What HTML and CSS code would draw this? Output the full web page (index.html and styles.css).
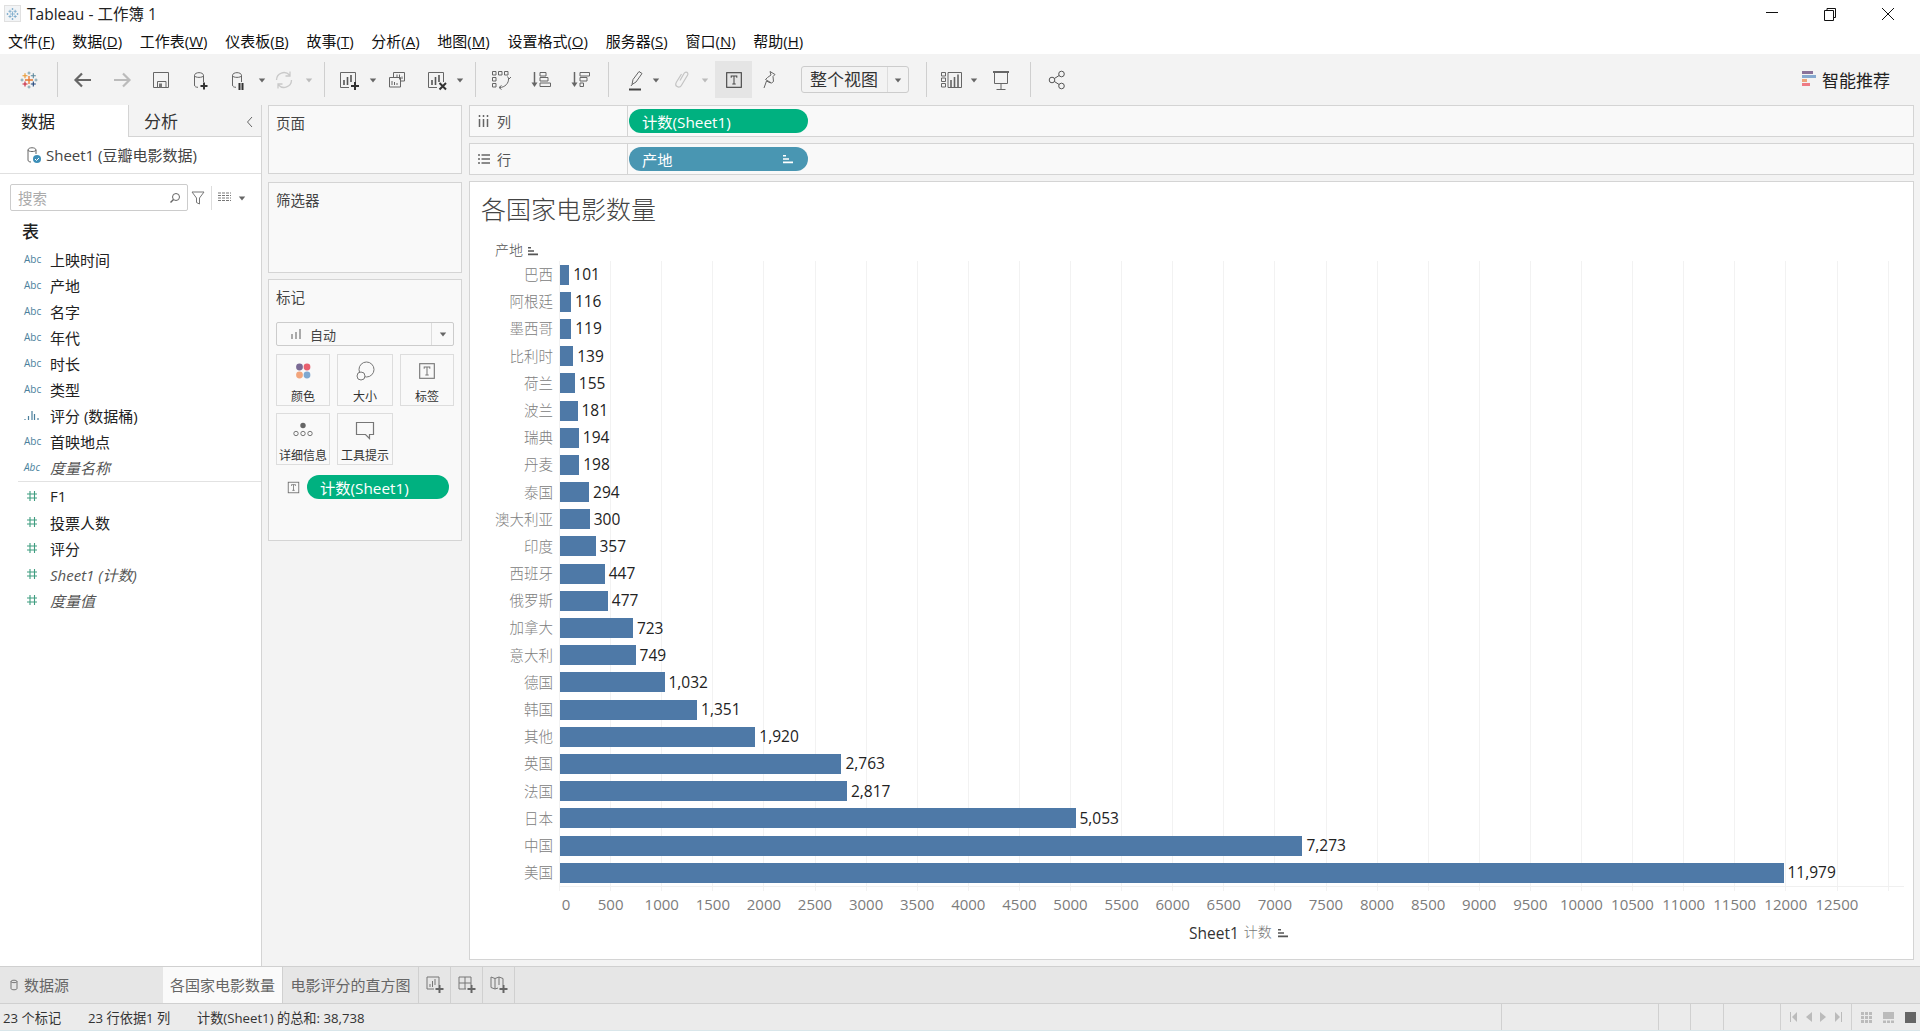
FILE: index.html
```html
<!DOCTYPE html>
<html lang="zh-CN">
<head>
<meta charset="utf-8">
<title>Tableau - 工作簿 1</title>
<link rel="stylesheet" href="styles.css">
</head>
<body>
<svg class="defs" width="0" height="0">
  <symbol id="dd" viewBox="0 0 10 10"><path d="M1 3h8L5 8z" fill="currentColor"/></symbol>
  <symbol id="logo" viewBox="0 0 24 24"><g fill="none" stroke-width="1.1">
    <path d="M8 12h8M12 8v8" stroke="#e8762c" stroke-width="1.300"/>
    <path d="M5.500 7.700h5M8 5.200v5" stroke="#e8962c"/>
    <path d="M13.800 7.700h5M16.300 5.200v5" stroke="#5b879b"/>
    <path d="M5.500 16h5M8 13.500v5" stroke="#c72037"/>
    <path d="M13.800 16h5M16.300 13.500v5" stroke="#1f447a"/>
    <path d="M10.500 5h3M12 3.500v3M10.500 19h3M12 17.500v3M3.500 12h3M5 10.500v3M17.500 12h3M19 10.500v3" stroke="#7099a6" stroke-width="0.900"/>
  </g></symbol>
  <symbol id="logo-pale" viewBox="0 0 24 24"><path d="M8 12h8M12 8v8M5.500 7.700h5M8 5.200v5M13.800 7.700h5M16.300 5.200v5M5.500 16h5M8 13.500v5M13.800 16h5M16.300 13.500v5M10.500 4h3M12 2.500v3M10.500 20h3M12 18.500v3M2.500 12h3M4 10.500v3M18.500 12h3M20 10.500v3" fill="none" stroke="#6fa3c7" stroke-width="1.200"/></symbol>
  <symbol id="db" viewBox="0 0 24 24"><path d="M6.500 7.500C6.500 3.700 15.500 3.700 15.500 7.500M6.500 7.500C6.500 10 15.500 10 15.500 7.500V14M6.500 7.500V17C6.500 18.600 8 19.300 10 19.300" fill="none" stroke="currentColor"/></symbol>
  <symbol id="chartbox" viewBox="0 0 24 24"><path d="M18.500 14V4.500H3.500V19.500H12" fill="none" stroke="#666"/><path d="M7 12v5M10.500 9v8M14 7v7" stroke="#555" stroke-width="1.600"/></symbol>
  <symbol id="hash" viewBox="0 0 12 12"><path d="M4 1v10M8.500 1v10M1 4h10M1 8h10" stroke="#3f9d80" stroke-width="1.100" fill="none"/></symbol>
  <symbol id="sort" viewBox="0 0 12 10"><path d="M1 1h3v1.500H1zM1 4.200h6v1.500H1zM1 7.500h10V9.200H1z" fill="currentColor"/></symbol>
  <symbol id="tbox" viewBox="0 0 16 16"><rect x="1.500" y="1.500" width="13" height="13" fill="none" stroke="currentColor"/><path d="M5.500 6V4.500h5V6M8 4.500v7M6.500 11.500h3" fill="none" stroke="currentColor" stroke-width="0.900"/></symbol>
</svg>

<header class="titlebar">
  <span class="app-icon"><svg width="16" height="16" viewBox="0 0 24 24"><use href="#logo-pale"/></svg></span>
  <span class="app-name">Tableau - 工作簿 1</span>
  <span class="win-btns">
    <svg class="win" viewBox="0 0 14 14"><path d="M1 5.500h12" stroke="#111" fill="none"/></svg>
    <svg class="win" viewBox="0 0 14 14"><path d="M1.500 3.500h9v10h-9zM4 3.500V1.500h8.500v9H10.500" stroke="#111" fill="none"/></svg>
    <svg class="win" viewBox="0 0 14 14"><path d="M1 1l12 12M13 1L1 13" stroke="#111" fill="none"/></svg>
  </span>
</header>

<nav class="menubar">
  <span>文件(<u>F</u>)</span><span>数据(<u>D</u>)</span><span>工作表(<u>W</u>)</span><span>仪表板(<u>B</u>)</span><span>故事(<u>T</u>)</span><span>分析(<u>A</u>)</span><span>地图(<u>M</u>)</span><span>设置格式(<u>O</u>)</span><span>服务器(<u>S</u>)</span><span>窗口(<u>N</u>)</span><span>帮助(<u>H</u>)</span>
</nav>

<div class="toolbar">
  <div class="tg g0"><span class="tb w57"><svg class="ic"><use href="#logo"/></svg></span></div><i class="sep"></i>
  <div class="tg g1">
    <span class="tb w39"><svg class="ic" viewBox="0 0 24 24"><path d="M20 12H5M11 5.500L4.500 12l6.500 6.500" fill="none" stroke="#666" stroke-width="2.200"/></svg></span>
    <span class="tb w39"><svg class="ic" viewBox="0 0 24 24"><path d="M4 12h15M13 5.500l6.500 6.500-6.500 6.500" fill="none" stroke="#bbb" stroke-width="2.200"/></svg></span>
    <span class="tb w39"><svg class="ic" viewBox="0 0 24 24"><path d="M4.500 4.500h15v15h-15zM8.500 19.500v-6h8.500v6" fill="none" stroke="#666"/><rect x="10" y="15.500" width="3" height="4" fill="#777"/></svg></span>
    <span class="tb w39 ink-g"><svg class="ic" viewBox="0 0 24 24"><use href="#db"/><path d="M16 14.500v7M12.500 18h7" stroke="#333" stroke-width="2"/></svg></span>
    <span class="tb w37 ink-g"><svg class="ic" viewBox="0 0 24 24"><use href="#db"/><path d="M13.500 15v7M16.500 15v7" stroke="#333" stroke-width="2"/></svg></span>
    <span class="tb w12"><svg class="dd"><use href="#dd"/></svg></span>
    <span class="tb w32"><svg class="ic" viewBox="0 0 24 24"><path d="M4.500 12A7.500 7.500 0 0 1 17.500 7M19.500 12A7.500 7.500 0 0 1 6.500 17M18 3.500V8h-4.500M6 20.500V16h4.500" fill="none" stroke="#c9c9c9" stroke-width="1.300"/></svg></span>
    <span class="tb w18 off"><svg class="dd"><use href="#dd"/></svg></span>
  </div><i class="sep"></i>
  <div class="tg g2">
    <span class="tb w38"><svg class="ic" viewBox="0 0 24 24"><use href="#chartbox"/><path d="M18 14v8M14 18h8" stroke="#333" stroke-width="2"/></svg></span>
    <span class="tb w10"><svg class="dd"><use href="#dd"/></svg></span>
    <span class="tb w40"><svg class="ic" viewBox="0 0 24 24"><path d="M7.500 9V4.500h11V13H15M3.500 9.500h11V19h-11z" fill="#f4f4f4" stroke="#666"/><path d="M11 6.500v3M13.500 6.500v5M16 8.500v2.500M6 13v4M8.500 14v3M11 15v2" stroke="#666" fill="none"/></svg></span>
    <span class="tb w38"><svg class="ic" viewBox="0 0 24 24"><use href="#chartbox"/><path d="M14.500 15l6.500 6.500M21 15l-6.500 6.500" stroke="#333" stroke-width="2"/></svg></span>
    <span class="tb w8"><svg class="dd"><use href="#dd"/></svg></span>
  </div><i class="sep"></i>
  <div class="tg g3">
    <span class="tb w40"><svg class="ic" viewBox="0 0 24 24"><path d="M3.500 3.500h3.500V7H3.500zM9.500 3.500H13V7H9.500zM15.500 3.500H19V7h-3.500zM3.500 9.500h3.500V13H3.500zM3.500 15.500h3.500V19H3.500zM19.500 10.500C20 15 16 19.500 10.500 19.500M18.500 8.500l1.500 2.500 2-2M12.500 17.500l-2.500 2 2.500 2" fill="none" stroke="#666"/></svg></span>
    <span class="tb w40"><svg class="ic" viewBox="0 0 24 24"><path d="M5.500 4v12" stroke="#666" stroke-width="1.500"/><path d="M2.500 14.500h6L5.500 19z" fill="#666"/><path d="M11 4.500h6V8h-6zM11 9.500h8V13h-8zM11 15h10.500v3.500H11z" fill="none" stroke="#666"/></svg></span>
    <span class="tb w39"><svg class="ic" viewBox="0 0 24 24"><path d="M5.500 4v12" stroke="#666" stroke-width="1.500"/><path d="M2.500 14.500h6L5.500 19z" fill="#666"/><path d="M11 4.500h9.500V8H11zM11 9.500h7V13h-7zM11 15h3.500v3.500H11z" fill="none" stroke="#666"/></svg></span>
  </div><i class="sep"></i>
  <div class="tg g4">
    <span class="tb w32"><svg class="ic" viewBox="0 0 24 24"><path d="M9 16.500l1-5L16 3.500l3 2-6 8.500zM8 18l1-1.500" fill="none" stroke="#666"/><path d="M6 21.500h12" stroke="#444" stroke-width="2"/></svg></span>
    <span class="tb w10"><svg class="dd"><use href="#dd"/></svg></span>
    <span class="tb w39"><svg class="ic" viewBox="0 0 24 24"><path d="M11 12.500l4-7c1.800-2.800 5-0.800 3.500 1.800l-6 10c-2.500 3.800-7.500 0.800-5-3.300l5-8" fill="none" stroke="#c4c4c4" stroke-width="1.200"/></svg></span>
    <span class="tb w10 off"><svg class="dd"><use href="#dd"/></svg></span>
    <span class="tb w37 sel"><svg class="tbig"><use href="#tbox"/></svg></span>
    <span class="tb w34"><svg class="ic" viewBox="0 0 24 24"><path d="M13 3.500l5 3-2 2 .5 5-2 1.500-6-3.500 2-2L14 7zM9.500 13L7 20M9.500 13l4 2" fill="none" stroke="#666"/></svg></span>
    <span class="fit"><span class="fit-txt">整个视图</span><span class="fit-dd"><svg class="dd"><use href="#dd"/></svg></span></span>
  </div><i class="sep"></i>
  <div class="tg g5">
    <span class="tb w34"><svg class="ic" viewBox="0 0 24 24"><path d="M1.500 4.500h4v3.500h-4zM1.500 10h4v3.500h-4zM1.500 15.500h4V19h-4zM8 4.500h13.500V19.500H8z" fill="none" stroke="#666"/><path d="M11 12v7M14.500 9v10M18 6.500V19" stroke="#666" stroke-width="1.600"/></svg></span>
    <span class="tb w10"><svg class="dd"><use href="#dd"/></svg></span>
    <span class="tb w44"><svg class="ic" viewBox="0 0 24 24"><path d="M4 4h16" stroke="#666" stroke-width="2"/><path d="M5.500 4.500v11h13v-11M12 15.500v5.500M7.500 21.500h9" fill="none" stroke="#666"/></svg></span>
  </div><i class="sep"></i>
  <div class="tg g6">
    <span class="tb w40"><svg class="ic" viewBox="0 0 24 24"><circle cx="7" cy="12" r="2.800" fill="none" stroke="#555"/><circle cx="16.500" cy="6" r="2.800" fill="none" stroke="#555"/><circle cx="16.500" cy="18" r="2.800" fill="none" stroke="#555"/><path d="M9.400 10.500l4.700-3M9.400 13.500l4.700 3" stroke="#555" fill="none"/></svg></span>
  </div>
  <div class="smart">
    <span class="smart-ic"><i class="b1"></i><i class="b2"></i><i class="b3"></i><i class="b4"></i></span>
    <span>智能推荐</span>
  </div>
</div>

<main class="workspace">
  <aside class="sidebar">
    <div class="side-tabs">
      <span class="stab on">数据</span>
      <span class="stab off-tab">分析<svg class="chev" viewBox="0 0 8 12"><path d="M6 1L1.500 6 6 11" fill="none" stroke="#666"/></svg></span>
    </div>
    <div class="source">
      <svg class="src-ic" viewBox="0 0 16 18"><path d="M2 4C2 1 10 1 10 4M2 4C2 6 10 6 10 4V8M2 4V14C2 15.500 3.500 16 5 16" fill="none" stroke="#666"/><circle cx="11" cy="13" r="4" fill="#3d8fb8"/><path d="M9 13l1.500 1.500L13 12" stroke="#fff" fill="none"/></svg>
      <span>Sheet1 (豆瓣电影数据)</span>
    </div>
    <div class="search-row">
      <span class="search">搜索<svg class="mag" viewBox="0 0 12 12"><circle cx="7" cy="5" r="3.500" fill="none" stroke="#666"/><path d="M4.500 7.500L1.500 10.500" stroke="#666" stroke-width="1.400"/></svg></span>
      <svg class="funnel" viewBox="0 0 14 16"><path d="M1 2h12L8.500 8v6l-3-1.500V8z" fill="none" stroke="#777"/></svg>
      <i class="vsep"></i>
      <svg class="gridic" viewBox="0 0 13 11"><path d="M0 1h13M0 3.500h13M0 6h13M0 8.500h13" stroke="#777" stroke-dasharray="3 1" fill="none"/></svg>
      <svg class="dd ddgray"><use href="#dd"/></svg>
    </div>
    <div class="table-head">表</div>
    <ul class="fields">
      <li><span class="abc">Abc</span>上映时间</li>
      <li><span class="abc">Abc</span>产地</li>
      <li><span class="abc">Abc</span>名字</li>
      <li><span class="abc">Abc</span>年代</li>
      <li><span class="abc">Abc</span>时长</li>
      <li><span class="abc">Abc</span>类型</li>
      <li><svg class="abc hist" viewBox="0 0 16 10"><path d="M1 9v1M4.500 6v4M8 1v9M10.500 4v6M14 8v2" stroke="#4a7f9c" stroke-width="1.200"/></svg>评分 (数据桶)</li>
      <li><span class="abc">Abc</span>首映地点</li>
      <li class="calc"><span class="abc">Abc</span>度量名称</li>
    </ul>
    <ul class="fields measures">
      <li><svg class="hash"><use href="#hash"/></svg>F1</li>
      <li><svg class="hash"><use href="#hash"/></svg>投票人数</li>
      <li><svg class="hash"><use href="#hash"/></svg>评分</li>
      <li class="calc"><svg class="hash"><use href="#hash"/></svg>Sheet1 (计数)</li>
      <li class="calc"><svg class="hash"><use href="#hash"/></svg>度量值</li>
    </ul>
  </aside>

  <section class="cards">
    <div class="panel pages"><h3>页面</h3></div>
    <div class="panel filters"><h3>筛选器</h3></div>
    <div class="panel marks">
      <h3>标记</h3>
      <div class="marktype">
        <svg class="auto-ic" viewBox="0 0 12 12"><path d="M2 6v5M6 4v7M10 1v10" stroke="#aaa" stroke-width="2"/></svg>
        <span class="mt-name">自动</span>
        <span class="mt-dd"><svg class="dd"><use href="#dd"/></svg></span>
      </div>
      <div class="markgrid">
        <div class="mcard"><svg class="mic" viewBox="0 0 24 24"><circle cx="8.500" cy="8" r="3.400" fill="#7a6a94"/><circle cx="16" cy="8" r="3.400" fill="#e8606f"/><circle cx="8.500" cy="16" r="3.400" fill="#f2a57c"/><circle cx="16" cy="16" r="3.400" fill="#7fa8d0"/></svg><span>颜色</span></div>
        <div class="mcard"><svg class="mic" viewBox="0 0 24 24"><circle cx="13.500" cy="10.500" r="7.500" fill="none" stroke="#777"/><circle cx="8" cy="17" r="4" fill="#fafafa" stroke="#777"/></svg><span>大小</span></div>
        <div class="mcard"><svg class="mic tgray" viewBox="0 0 16 16"><use href="#tbox"/></svg><span>标签</span></div>
        <div class="mcard"><svg class="mic" viewBox="0 0 24 24"><circle cx="12" cy="7.500" r="2.700" fill="#666"/><circle cx="5" cy="15.500" r="2.200" fill="none" stroke="#777"/><circle cx="12" cy="15.500" r="2.200" fill="none" stroke="#777"/><circle cx="19" cy="15.500" r="2.200" fill="none" stroke="#777"/></svg><span>详细信息</span></div>
        <div class="mcard"><svg class="mic" viewBox="0 0 24 24"><path d="M3.500 4.500h17v12h-4v4l-4-4h-9z" fill="none" stroke="#777" stroke-width="1.200"/></svg><span>工具提示</span></div>
      </div>
      <div class="markpill">
        <svg class="pill-t"><use href="#tbox"/></svg>
        <span class="pill green wide">计数(Sheet1)</span>
      </div>
    </div>
  </section>

  <section class="view">
    <div class="shelf">
      <div class="shelf-name"><svg class="shelf-ic" viewBox="0 0 12 12"><path d="M1.500 0v2M1.500 4v8M5.500 0v2M5.500 4v8M9.500 0v2M9.500 4v8" stroke="#666" stroke-width="1.500" fill="none"/></svg>列</div>
      <span class="pill green shelf-pill">计数(Sheet1)</span>
    </div>
    <div class="shelf">
      <div class="shelf-name"><svg class="shelf-ic" viewBox="0 0 12 12"><path d="M0 2h2M3.500 2H12M0 6h2M3.500 6H12M0 10h2M3.500 10H12" stroke="#666" stroke-width="1.500" fill="none"/></svg>行</div>
      <span class="pill blue shelf-pill">产地<svg class="pill-sort"><use href="#sort"/></svg></span>
    </div>

    <div class="chart">
      <h1 class="chart-title">各国家电影数量</h1>
      <div class="y-head">产地<svg class="head-sort"><use href="#sort"/></svg></div>
      <div class="plot">
        <div class="row"><span class="lbl">巴西</span><div class="track"><i class="bar" style="width:9.3px"></i><b class="val">101</b></div></div>
        <div class="row"><span class="lbl">阿根廷</span><div class="track"><i class="bar" style="width:10.9px"></i><b class="val">116</b></div></div>
        <div class="row"><span class="lbl">墨西哥</span><div class="track"><i class="bar" style="width:11.2px"></i><b class="val">119</b></div></div>
        <div class="row"><span class="lbl">比利时</span><div class="track"><i class="bar" style="width:13.2px"></i><b class="val">139</b></div></div>
        <div class="row"><span class="lbl">荷兰</span><div class="track"><i class="bar" style="width:14.8px"></i><b class="val">155</b></div></div>
        <div class="row"><span class="lbl">波兰</span><div class="track"><i class="bar" style="width:17.5px"></i><b class="val">181</b></div></div>
        <div class="row"><span class="lbl">瑞典</span><div class="track"><i class="bar" style="width:18.8px"></i><b class="val">194</b></div></div>
        <div class="row"><span class="lbl">丹麦</span><div class="track"><i class="bar" style="width:19.2px"></i><b class="val">198</b></div></div>
        <div class="row"><span class="lbl">泰国</span><div class="track"><i class="bar" style="width:29.1px"></i><b class="val">294</b></div></div>
        <div class="row"><span class="lbl">澳大利亚</span><div class="track"><i class="bar" style="width:29.7px"></i><b class="val">300</b></div></div>
        <div class="row"><span class="lbl">印度</span><div class="track"><i class="bar" style="width:35.5px"></i><b class="val">357</b></div></div>
        <div class="row"><span class="lbl">西班牙</span><div class="track"><i class="bar" style="width:44.7px"></i><b class="val">447</b></div></div>
        <div class="row"><span class="lbl">俄罗斯</span><div class="track"><i class="bar" style="width:47.8px"></i><b class="val">477</b></div></div>
        <div class="row"><span class="lbl">加拿大</span><div class="track"><i class="bar" style="width:72.9px"></i><b class="val">723</b></div></div>
        <div class="row"><span class="lbl">意大利</span><div class="track"><i class="bar" style="width:75.6px"></i><b class="val">749</b></div></div>
        <div class="row"><span class="lbl">德国</span><div class="track"><i class="bar" style="width:104.5px"></i><b class="val">1,032</b></div></div>
        <div class="row"><span class="lbl">韩国</span><div class="track"><i class="bar" style="width:137.1px"></i><b class="val">1,351</b></div></div>
        <div class="row"><span class="lbl">其他</span><div class="track"><i class="bar" style="width:195.3px"></i><b class="val">1,920</b></div></div>
        <div class="row"><span class="lbl">英国</span><div class="track"><i class="bar" style="width:281.4px"></i><b class="val">2,763</b></div></div>
        <div class="row"><span class="lbl">法国</span><div class="track"><i class="bar" style="width:287px"></i><b class="val">2,817</b></div></div>
        <div class="row"><span class="lbl">日本</span><div class="track"><i class="bar" style="width:515.5px"></i><b class="val">5,053</b></div></div>
        <div class="row"><span class="lbl">中国</span><div class="track"><i class="bar" style="width:742.4px"></i><b class="val">7,273</b></div></div>
        <div class="row"><span class="lbl">美国</span><div class="track"><i class="bar" style="width:1223.5px"></i><b class="val">11,979</b></div></div>
      </div>
      <div class="axis-ticks"></div>
      <div class="axis-labels">
        <span class="zero">0</span><span>500</span><span>1000</span><span>1500</span><span>2000</span><span>2500</span><span>3000</span><span>3500</span><span>4000</span><span>4500</span><span>5000</span><span>5500</span><span>6000</span><span>6500</span><span>7000</span><span>7500</span><span>8000</span><span>8500</span><span>9000</span><span>9500</span><span>10000</span><span>10500</span><span>11000</span><span>11500</span><span>12000</span><span>12500</span>
      </div>
      <div class="axis-title"><span>Sheet1</span><span class="axis-cjk">计数</span><svg class="head-sort"><use href="#sort"/></svg></div>
    </div>
  </section>
</main>

<div class="tabs">
  <span class="tab t-src"><svg class="src-mini" viewBox="0 0 8 12"><path d="M1 2.500C1 .8 7 .8 7 2.500V9.500C7 11.200 1 11.200 1 9.500zM1 2.500C1 4 7 4 7 2.500" fill="none" stroke="#777"/></svg>数据源</span>
  <span class="tab t-on">各国家电影数量</span>
  <span class="tab t-next">电影评分的直方图</span>
  <span class="tab t-add"><svg class="add" viewBox="0 0 20 20"><path d="M14 10V2H2v12h7" fill="none" stroke="#777"/><path d="M5 9v3M7.500 6v6M10 4v6" stroke="#777"/><path d="M14.500 10v8M10.500 14h8" stroke="#666" stroke-width="2"/></svg></span>
  <span class="tab t-add"><svg class="add" viewBox="0 0 20 20"><path d="M14 10V2H2v12h7M2 8h12M8 2v12" fill="none" stroke="#777"/><path d="M14.500 10v8M10.500 14h8" stroke="#666" stroke-width="2"/></svg></span>
  <span class="tab t-add"><svg class="add" viewBox="0 0 20 20"><path d="M2 2l4 1.500L10 2l4 1.500V10M2 2v10.500L6 14l3-1M6 3.500V14M10 2v8" fill="none" stroke="#777"/><path d="M14.500 10v8M10.500 14h8" stroke="#666" stroke-width="2"/></svg></span>
</div>

<footer class="status">
  <span class="st-a">23 个标记</span>
  <span class="st-b">23 行依据1 列</span>
  <span class="st-c">计数(Sheet1) 的总和: 38,738</span>
  <span class="st-cell c157"></span>
  <span class="st-cell c32"></span>
  <span class="st-cell c33"></span>
  <span class="st-cell c57"></span>
  <span class="st-cell c71 nav">
    <svg class="navic" viewBox="0 0 8 10"><path d="M.5 0v10" stroke="#bbb"/><path d="M7 0v10L2 5z" fill="#bbb"/></svg>
    <svg class="navic" viewBox="0 0 8 10"><path d="M7 0v10L1 5z" fill="#bbb"/></svg>
    <svg class="navic" viewBox="0 0 8 10"><path d="M1 0v10l6-5z" fill="#bbb"/></svg>
    <svg class="navic" viewBox="0 0 8 10"><path d="M7.500 0v10" stroke="#bbb"/><path d="M1 0v10l5-5z" fill="#bbb"/></svg>
  </span>
  <span class="st-cell views">
    <svg class="vic" viewBox="0 0 11 11"><path d="M0 0h3v3H0zM4 0h3v3H4zM8 0h3v3H8zM0 4h3v3H0zM4 4h3v3H4zM8 4h3v3H8zM0 8h3v3H0zM4 8h3v3H4zM8 8h3v3H8z" fill="#bbb"/></svg>
    <svg class="vic" viewBox="0 0 11 11"><path d="M0 0h11v7H0zM0 8.500h3V11H0zM4 8.500h3V11H4zM8 8.500h3V11H8z" fill="#bbb"/></svg>
    <svg class="vic" viewBox="0 0 11 11"><path d="M0 0h11v11H0z" fill="#666"/></svg>
  </span>
</footer>
</body>
</html>
```

FILE: styles.css
```css
* { box-sizing: border-box; }
html, body { height: 100%; }
body {
  margin: 0;
  width: 1920px;
  height: 1031px;
  display: flex;
  flex-direction: column;
  overflow: hidden;
  background: #fff;
  color: #222;
  font-family: "Open Sans", "Noto Sans CJK SC", sans-serif;
  font-size: 15px;
}
.defs { position: absolute; }
ul { list-style: none; margin: 0; padding: 0; }
h1, h3 { margin: 0; font-weight: 400; }

/* title + menu */
.titlebar { height: 27px; display: flex; align-items: center; padding-left: 4px; flex: none; }
.app-icon { width: 17px; height: 17px; background: #f2f4f6; border: 1px solid #e0e0e0; display: flex; align-items: center; justify-content: center; }
.app-name { margin-left: 6px; font-size: 15.500px; color: #222; }
.win-btns { margin-left: auto; display: flex; gap: 44px; padding-right: 25px; align-items: center; }
.win { width: 14px; height: 14px; display: block; }
.menubar { height: 27px; display: flex; gap: 17.700px; padding-left: 8px; align-items: center; font-size: 15px; color: #111; flex: none; }

/* toolbar */
.toolbar { height: 51px; background: #f3f3f3; display: flex; flex: none; align-items: center; }
.sep { width: 1px; height: 35px; background: #cfcfcf; flex: none; }
.tg { display: flex; align-items: center; height: 100%; flex: none; }
.g0 { width: 57px; }
.g1 { width: 266px; padding-left: 5px; }
.g2 { width: 150px; padding-left: 5px; }
.g3 { width: 132px; padding-left: 5px; }
.g4 { width: 317px; padding-left: 10px; }
.g5 { width: 103px; padding-left: 8px; }
.g6 { width: 80px; padding-left: 6px; }
.tb { display: flex; align-items: center; justify-content: center; height: 37px; flex: none; color: #555; }
.w57 { width: 57px; } .w44 { width: 44px; } .w40 { width: 40px; } .w39 { width: 39px; } .w38 { width: 38px; }
.w37 { width: 37px; } .w34 { width: 34px; } .w32 { width: 32px; } .w18 { width: 18px; } .w12 { width: 12px; }
.w10 { width: 10px; } .w8 { width: 8px; }
.ic { width: 24px; height: 24px; display: block; overflow: visible; }
.ink-g { color: #666; }
.dd { width: 8px; height: 8px; display: block; color: #666; flex: none; overflow: visible; }
.off .dd { color: #bbb; }
.sel { background: #e5e5e5; margin-left: 5px; }
.tbig { width: 18px; height: 18px; color: #444; }
.fit { margin-left: 15px; width: 108px; height: 27px; display: flex; border: 1px solid #ccc; border-radius: 3px; align-items: center; flex: none; }
.fit-txt { width: 85px; padding-left: 8px; font-size: 17px; line-height: 25px; color: #333; white-space: nowrap; }
.fit-dd { flex: 1; height: 100%; border-left: 1px solid #ddd; display: flex; align-items: center; justify-content: center; }
.smart { margin-left: auto; padding-right: 30px; display: flex; align-items: center; gap: 6px; font-size: 17px; color: #222; }
.smart-ic { display: flex; flex-direction: column; gap: 1px; width: 14px; margin-top: -3px; }
.smart-ic i { height: 3px; display: block; }
.b1 { width: 11px; background: #8a7299; }
.b2 { width: 14px; background: #86a9cf; }
.b3 { width: 5px; background: #eda47a; }
.b4 { width: 8px; background: #ee7b85; }

/* workspace */
.workspace { flex: 1; min-height: 0; display: flex; background: #f3f3f3; border-bottom: 1px solid #d0d0d0; }
.sidebar { width: 262px; background: #fff; border-right: 1px solid #d4d4d4; flex: none; }
.side-tabs { display: flex; height: 32px; }
.stab { font-size: 17px; line-height: 34px; }
.on { width: 128px; padding-left: 21px; }
.off-tab { flex: 1; padding: 2px 7px 0 15px; background: #f3f3f3; border-left: 1px solid #d4d4d4; border-bottom: 1px solid #d4d4d4; display: flex; align-items: center; justify-content: space-between; color: #333; }
.chev { width: 8px; height: 12px; }
.source { height: 37px; display: flex; align-items: center; padding: 0 0 1px 26px; gap: 4px; border-bottom: 1px solid #e0e0e0; font-size: 15px; color: #444; }
.src-ic { width: 16px; height: 18px; }
.search-row { display: flex; align-items: center; height: 37px; padding: 10px 0 0 10px; }
.search { width: 178px; height: 27px; border: 1px solid #ccc; border-radius: 2px; font-size: 14.500px; color: #aaa; padding-left: 7px; display: flex; align-items: center; justify-content: space-between; padding-right: 6px; }
.mag { width: 12px; height: 12px; }
.funnel { width: 14px; height: 16px; margin-left: 3px; }
.vsep { width: 1px; height: 24px; background: #ddd; margin: 0 6px 0 6px; }
.gridic { width: 13px; height: 11px; }
.ddgray { margin-left: 7px; }
.table-head { height: 34px; padding-left: 22px; font-size: 17px; line-height: 42px; color: #222; font-weight: 500; }
.fields li { height: 26px; display: flex; align-items: center; font-size: 15px; color: #222; padding-left: 24px; }
.fields { padding-top: 1px; }
.abc { width: 26px; font-size: 10px; color: #4a7f9c; flex: none; height: 12px; line-height: 12px; }
.hist { width: 16px; height: 10px; margin-right: 10px; }
.fields li.calc { font-style: italic; color: #555; }
.measures { margin: 1px 0 0 18px; border-top: 1px solid #e2e2e2; padding-top: 1px; }
.measures li { padding-left: 8px; }
.hash { width: 12px; height: 12px; margin-right: 12px; flex: none; }

/* cards */
.cards { width: 194px; margin-left: 6px; display: flex; flex-direction: column; flex: none; }
.panel { background: #f9f9f9; border: 1px solid #d4d4d4; padding: 8px 7px 0; flex: none; }
.panel h3 { font-size: 14.500px; line-height: 20px; color: #444; }
.pages { height: 69px; margin-bottom: 8px; }
.filters { height: 91px; margin-bottom: 6px; }
.marks { height: 262px; }
.marktype { margin-top: 14px; height: 24px; border: 1px solid #ccc; border-radius: 2px; display: flex; align-items: center; background: #f9f9f9; }
.auto-ic { width: 12px; height: 12px; margin-left: 13px; }
.mt-name { margin-left: 8px; font-size: 13px; color: #444; }
.mt-dd { margin-left: auto; width: 22px; height: 100%; border-left: 1px solid #ddd; display: flex; align-items: center; justify-content: center; }
.markgrid { display: grid; grid-template-columns: 54px 56px 54px; column-gap: 7px; row-gap: 7px; margin-top: 8px; grid-auto-rows: 52px; width: 178px; }
.mcard { border: 1px solid #ddd; display: flex; flex-direction: column; align-items: center; font-size: 12px; line-height: 16px; color: #333; padding-top: 4px; white-space: nowrap; }
.mic { width: 24px; height: 24px; margin-bottom: 6px; flex: none; }
.mic.tgray { width: 18px; height: 18px; margin: 3px 0 9px; color: #777; }
.markpill { display: flex; align-items: center; margin-top: 10px; padding-left: 11px; gap: 7px; }
.pill-t { width: 13px; height: 13px; color: #666; flex: none; }
.pill { height: 24px; border-radius: 12px; color: #fff; font-size: 15.300px; display: flex; align-items: center; padding: 0 0 1px 13px; flex: none; }
.green { background: #00b180; }
.blue { background: #4996b2; }
.wide { width: 142px; }

/* view */
.view { width: 1445px; margin-left: 7px; display: flex; flex-direction: column; flex: none; }
.shelf { height: 32px; background: #f9f9f9; border: 1px solid #d4d4d4; display: flex; align-items: center; margin-bottom: 6px; flex: none; }
.shelf-name { width: 158px; height: 100%; border-right: 1px solid #d4d4d4; display: flex; align-items: center; padding-left: 8px; gap: 7px; font-size: 14px; color: #555; flex: none; }
.shelf-ic { width: 12px; height: 12px; }
.shelf-pill { width: 179px; margin-left: 1px; justify-content: space-between; padding-right: 14px; }
.pill-sort { width: 12px; height: 10px; color: #fff; }
.chart { flex: 1; min-height: 0; margin-bottom: 6px; background: #fff; border: 1px solid #d4d4d4; padding-top: 13px; }
.chart-title { font-family: "Liberation Serif", "Noto Sans CJK SC", serif; font-size: 25px; line-height: 32px; padding-left: 11px; color: #444; font-weight: 300; }
.y-head { margin-top: 14px; height: 20px; line-height: 20px; padding-left: 25px; font-size: 14px; color: #555; font-weight: 300; font-family: "Liberation Serif", "Noto Sans CJK SC", serif; display: flex; align-items: center; gap: 4px; }
.head-sort { width: 12px; height: 10px; color: #555; }
.plot { width: 1434px; }
.row { height: 27.200px; display: flex; }
.lbl { width: 89px; padding-right: 6px; text-align: right; font-family: "Liberation Serif", "Noto Sans CJK SC", serif; font-weight: 300; font-size: 14.500px; line-height: 28px; color: #808080; flex: none; white-space: nowrap; }
.track { flex: 1; display: flex; align-items: center; background-image: repeating-linear-gradient(to right, #f2f2f2 0, #f2f2f2 1px, transparent 1px, transparent 51.100px); }
.bar { height: 20px; margin-left: 1px; background: #4e79a7; display: block; flex: none; }
.val { margin: 0 0 1px 4px; font-weight: 400; font-size: 15.500px; line-height: 20px; color: #222; }
.axis-ticks { width: 1345px; margin-left: 89px; height: 5px; border-top: 1px solid #f0f0f0; background-image: repeating-linear-gradient(to right, #f2f2f2 0, #f2f2f2 1px, transparent 1px, transparent 51.100px); }
.axis-labels { display: flex; margin-left: 64px; height: 22px; margin-top: 2px; }
.axis-labels span { width: 51.100px; flex: none; text-align: center; font-size: 15px; line-height: 22px; color: #7c7c7c; white-space: nowrap; display: flex; justify-content: center; }
.axis-labels .zero { padding-left: 13px; }
.axis-title { margin: 7px 0 0 719px; display: flex; align-items: center; gap: 5px; font-size: 15.500px; line-height: 22px; color: #333; }
.axis-cjk { font-family: "Liberation Serif", "Noto Sans CJK SC", serif; font-weight: 300; font-size: 14px; color: #777; }

/* sheet tabs + status */
.tabs { height: 37px; background: #e6e6e6; display: flex; flex: none; border-bottom: 1px solid #d0d0d0; }
.tab { display: flex; align-items: center; font-size: 15px; color: #666; border-right: 1px solid #d0d0d0; flex: none; white-space: nowrap; padding-bottom: 1px; }
.t-src { width: 163px; padding-left: 10px; gap: 6px; border-right: 0; }
.src-mini { width: 8px; height: 12px; }
.t-on { width: 120px; background: #fafafa; justify-content: center; }
.t-next { width: 136px; justify-content: center; }
.t-add { width: 32px; justify-content: center; }
.add { width: 20px; height: 20px; }
.status { height: 27px; background: #ebebeb; display: flex; align-items: center; font-size: 13.200px; color: #333; flex: none; border-bottom: 1px solid #d9e6ea; }
.st-a { width: 88px; padding-left: 3px; flex: none; }
.st-b { width: 109px; flex: none; }
.st-c { width: 1304px; flex: none; }
.st-cell { height: 100%; border-left: 1px solid #d0d0d0; flex: none; }
.c157 { width: 157px; } .c32 { width: 32px; } .c33 { width: 33px; } .c57 { width: 57px; } .c71 { width: 71px; }
.nav { display: flex; align-items: center; justify-content: space-around; padding: 0 6px; }
.navic { width: 8px; height: 10px; }
.views { flex: 1; display: flex; align-items: center; gap: 11px; padding-left: 9px; }
.vic { width: 11px; height: 11px; }
```
